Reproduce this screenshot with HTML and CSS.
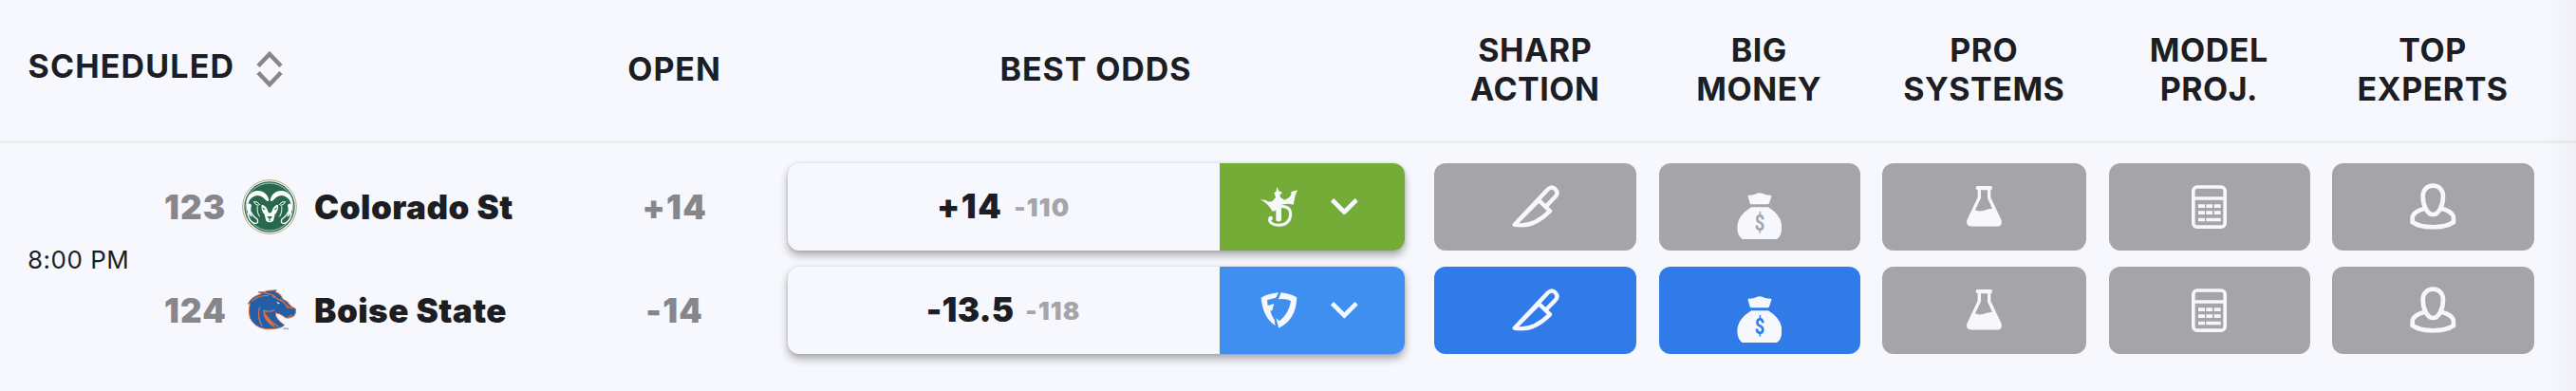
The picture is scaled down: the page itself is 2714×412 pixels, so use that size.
FILE: index.html
```html
<!DOCTYPE html>
<html lang="en">
<head>
    <meta charset="UTF-8">
    <meta name="viewport" content="width=device-width, initial-scale=1.0">
    <title>Best Odds</title>
    <link rel="stylesheet" href="styles.css">
</head>
<body>
    <svg class="sprite">
        <symbol id="knife" viewBox="98 77 150 134">
            <path d="M106 202L212 90Q224 79 235 90Q246 102 235 114L203 147M183 125L218 159Q172 204 128 204Q110 204 106 202Z" fill="none" stroke="currentColor" stroke-width="13" stroke-linejoin="round"/>
        </symbol>
        <symbol id="flask" viewBox="92 79 112 128">
            <path d="M126 79H168Q173 79 173 85Q173 91 168 92V115L202 187Q206 207 188 207H108Q89 207 93 187L127 115V92Q121 91 121 85Q121 79 126 79ZM137 92V117L119 155Q130 161 147 156Q158 151 173 150L158 117V92Z" fill="currentColor" fill-rule="evenodd"/>
        </symbol>
        <symbol id="calc" viewBox="117 72 111 138">
            <rect x="122.500" y="78" width="100" height="126.500" rx="12" fill="none" stroke="currentColor" stroke-width="11"/>
            <path d="M122 114H223" stroke="currentColor" stroke-width="11"/>
            <path d="M138 133h21v11h-21zM163 133h20v11h-20zM188 133h21v11h-21zM138 154h21v11h-21zM163 154h20v11h-20zM188 154h21v11h-21zM138 176h21v11h-21zM163 176h46v11h-46z" fill="currentColor"/>
        </symbol>
        <symbol id="person" viewBox="809 69 146 146">
            <path d="M882 77C900 77 914 90 914 110C914 140 900 168 882 168C864 168 850 140 850 110C850 90 864 77 882 77ZM856 149Q817 159 817 180V192Q840 208 882 208Q924 208 947 192V180Q947 159 908 149" fill="none" stroke="currentColor" stroke-width="14"/>
        </symbol>
        <symbol id="chevron" viewBox="306 87 86 53">
            <path d="M310.500 92L349 130.500L387.500 92" fill="none" stroke="currentColor" stroke-width="14"/>
        </symbol>
    </svg>

    <div class="odds-table">
        <div class="table-header">
            <div class="head-cell scheduled">
                <span>SCHEDULED</span>
                <svg class="sort-icon" viewBox="0 0 28 38"><path d="M2 15.500L14 3L26 15.500M2 22.500L14 35L26 22.500" fill="none" stroke="#86868b" stroke-width="4.500"/></svg>
            </div>
            <div class="head-cell wide">OPEN</div>
            <div class="head-cell wide">BEST ODDS</div>
            <div class="head-cell">SHARP<br>ACTION</div>
            <div class="head-cell">BIG<br>MONEY</div>
            <div class="head-cell">PRO<br>SYSTEMS</div>
            <div class="head-cell">MODEL<br>PROJ.</div>
            <div class="head-cell">TOP<br>EXPERTS</div>
            <div class="head-cell"></div>
        </div>

        <div class="game">
            <div class="game-info">
                <div class="time">8:00 PM</div>
                <div class="teams">
                    <div class="team">
                        <span class="rotation">123</span>
                        <svg class="logo" viewBox="45 56 174 174">
                            <circle cx="132" cy="143" r="85" fill="#f7f8fe" stroke="#b3a575" stroke-width="3"/>
                            <circle cx="132" cy="143" r="80" fill="#28694d"/>
                            <circle cx="132" cy="143" r="75" fill="none" stroke="#f7f8fe" stroke-width="2"/>
                            <path d="M130 122C126 101 108 89 88 93C64 98 57 125 59 144C61 160 68 170 77 176Q70 156 75 137Q68 130 64 134Q67 117 84 109Q103 103 117 119L126 126ZM134 122C138 101 156 89 176 93C200 98 207 125 205 144C203 160 196 170 187 176Q194 156 189 137Q196 130 200 134Q197 117 180 109Q161 103 147 119L138 126Z" fill="#fff"/>
                            <path d="M64 161Q65 187 84 195Q98 197 94 183Q77 170 73 159M200 161Q199 187 180 195Q166 197 170 183Q187 170 191 159" fill="none" stroke="#fff" stroke-width="4"/>
                            <path d="M102 137Q94 124 82 127Q88 139 98 138M162 137Q170 124 182 127Q176 139 166 138M94 141Q91 161 101 174M170 141Q173 161 163 174" fill="none" stroke="#fff" stroke-width="3"/>
                            <path d="M107 136Q120 138 125 152L129 162L137 162L141 152Q146 138 159 136Q162 152 149 167L144 187Q132 197 121 187L116 167Q103 152 107 136Z" fill="#fff"/>
                            <path d="M109 144L120 151L112 151ZM156 144L145 151L153 151ZM124 173H141L136 180H129ZM131 179h3v9h-3z" fill="#28694d"/>
                        </svg>
                        <span class="name">Colorado St</span>
                    </div>
                    <div class="team">
                        <span class="rotation">124</span>
                        <svg class="logo" viewBox="45 42 174 174">
                            <path d="M64 109Q72 89 97 80L108 76L96 71Q116 73 126 67L154 65L150 71Q166 73 174 94L187 101L201 117L214 124Q217 139 209 147L200 151Q185 157 176 148Q166 139 151 137Q149 154 179 176Q164 190 119 188Q83 182 70 153Q64 131 70 107Z" fill="#235fa9" stroke="#e2703d" stroke-width="3"/>
                            <path d="M75 101Q100 79 128 83M113 74Q140 77 151 87M141 84L158 93L174 102L193 119L205 123M164 94Q180 103 190 122M113 130Q132 136 149 128M204 143L190 149" fill="none" stroke="#e2703d" stroke-width="3.500"/>
                            <path d="M101 118Q93 150 109 180Q98 167 97 147Q96 130 101 118ZM113 130Q124 157 150 184Q136 178 123 162Q112 147 113 130ZM121 144Q139 168 162 181Q139 173 125 158Z" fill="#e2703d" stroke="#e2703d" stroke-width="2"/>
                            <path d="M154 102L165 106L159 109Z" fill="#fff"/>
                            <path d="M174 184h18v6h-18z" fill="#bcd5ee"/>
                            <path d="M176 186h7M185 189v-3l3 2l3-2v3" stroke="#4b83bd" stroke-width="1.500" fill="none"/>
                        </svg>
                        <span class="name">Boise State</span>
                    </div>
                </div>
            </div>

            <div class="cell">
                <div class="line">+14</div>
                <div class="line">-14</div>
            </div>

            <div class="cell">
                <div class="best-odds">
                    <div class="price"><span class="spread">+14</span><span class="juice">-110</span></div>
                    <div class="book draftkings">
                        <svg class="book-logo" viewBox="84 50 117 126">
                            <path d="M84 90L101 92Q111 100 122 94L132 83L129 73L126 68L133 66L136 50L142 63L150 66L152 71L145 74L147 83L160 91Q177 86 182 71L180 66L201 60L194 76L188 106Q149 96 122 128Q110 104 84 90Z" fill="currentColor"/>
                            <path d="M124 124Q143 107 163 113Q180 118 179 138Q176 170 141 171Q112 169 112 151" fill="none" stroke="currentColor" stroke-width="9"/>
                            <circle cx="116" cy="149" r="7" fill="currentColor"/>
                            <path d="M133 118L150 111V156Q141 163 133 156Z" fill="currentColor"/>
                        </svg>
                        <svg class="chevron"><use href="#chevron"/></svg>
                    </div>
                </div>
                <div class="best-odds">
                    <div class="price"><span class="spread half">-13.5</span><span class="juice">-118</span></div>
                    <div class="book fanduel">
                        <svg class="book-logo" viewBox="84 377 117 126">
                            <path d="M86 400Q110 387 141 384L133 400Q116 403 105 408L107 425L127 419L121 440L115 442Q120 459 128 470L131 488Q91 462 86 400ZM149 384Q178 387 199 399Q197 470 142 496L133 465L144 474Q175 448 180 410Q164 402 141 405Z" fill="currentColor"/>
                        </svg>
                        <svg class="chevron"><use href="#chevron"/></svg>
                    </div>
                </div>
            </div>

            <div class="cell">
                <div class="signal"><svg class="knife"><use href="#knife"/></svg></div>
                <div class="signal active"><svg class="knife"><use href="#knife"/></svg></div>
            </div>
            <div class="cell">
                <div class="signal">
                    <svg class="bag" viewBox="809 98 142 147">
                        <path d="M846 106Q858 106 864 104Q881 93 898 104Q904 106 916 106Q919 107 918 110L911 132Q910 135 907 135H855Q851 135 850 132L844 110Q843 107 846 106ZM855 144H908Q951 170 951 207Q951 235 935 245H826Q810 235 810 207Q811 170 855 144Z" fill="currentColor"/>
                        <text class="dollar" transform="translate(881 219) scale(.76 1)" text-anchor="middle">$</text>
                    </svg>
                </div>
                <div class="signal active">
                    <svg class="bag" viewBox="809 98 142 147">
                        <path d="M846 106Q858 106 864 104Q881 93 898 104Q904 106 916 106Q919 107 918 110L911 132Q910 135 907 135H855Q851 135 850 132L844 110Q843 107 846 106ZM855 144H908Q951 170 951 207Q951 235 935 245H826Q810 235 810 207Q811 170 855 144Z" fill="currentColor"/>
                        <text class="dollar" transform="translate(881 219) scale(.76 1)" text-anchor="middle">$</text>
                    </svg>
                </div>
            </div>
            <div class="cell">
                <div class="signal"><svg class="flask"><use href="#flask"/></svg></div>
                <div class="signal"><svg class="flask"><use href="#flask"/></svg></div>
            </div>
            <div class="cell">
                <div class="signal"><svg class="calc"><use href="#calc"/></svg></div>
                <div class="signal"><svg class="calc"><use href="#calc"/></svg></div>
            </div>
            <div class="cell">
                <div class="signal"><svg class="person"><use href="#person"/></svg></div>
                <div class="signal"><svg class="person"><use href="#person"/></svg></div>
            </div>
        </div>
        <div class="edge-shadow"></div>
    </div>
</body>
</html>
```
FILE: styles.css
```css
:root {
    --bg: #f7f8fe;
    --text: #1c1e24;
    --gray: #86868b;
    --gray-light: #a5a4a9;
    --blue: #307be8;
    --columns: 611px 199px 689px 236.5px 235.5px 238.5px 235.5px 236px 1fr;
}

* {
    box-sizing: border-box;
}

body {
    margin: 0;
    background: var(--bg);
    color: var(--text);
    font-family: Inter, "Liberation Sans", sans-serif;
    font-size: 34px;
}

svg {
    display: block;
    flex-shrink: 0;
}

.sprite {
    width: 0;
    height: 0;
    position: absolute;
}

.odds-table {
    position: relative;
    height: 412px;
    overflow: hidden;
}

.table-header,
.game {
    display: grid;
    grid-template-columns: var(--columns);
}

.table-header {
    height: 151px;
}

.head-cell {
    display: flex;
    align-items: center;
    justify-content: center;
    border-bottom: 3px solid #ecedf1;
    padding-bottom: 3px;
    font-weight: 700;
    line-height: 41px;
    letter-spacing: 0.5px;
    text-align: center;
}

.head-cell.wide {
    letter-spacing: 0.9px;
    padding-bottom: 4px;
}

.head-cell.scheduled {
    justify-content: flex-start;
    gap: 23px;
    padding: 0 0 9px 29.5px;
    letter-spacing: 1.15px;
}

.sort-icon {
    width: 28px;
    height: 38px;
    margin-top: 7px;
}

.game-info {
    display: flex;
    align-items: center;
    padding: 20.5px 0 0 29px;
}

.time {
    width: 144px;
    font-size: 26px;
    letter-spacing: 0.5px;
    padding-top: 3px;
}

.teams,
.cell {
    display: flex;
    flex-direction: column;
    gap: 17.3px;
}

.cell {
    padding: 20.5px 11.5px 0 12px;
}

.team,
.line {
    height: 92px;
    display: flex;
    align-items: center;
    font-size: 35px;
    font-weight: 900;
}

.rotation {
    width: 82px;
    color: var(--gray);
    letter-spacing: 1.2px;
}

.logo {
    width: 58px;
    height: 58px;
}

.name {
    margin-left: 18px;
    letter-spacing: 0.5px;
}

.line {
    justify-content: center;
    color: var(--gray);
    letter-spacing: 1.3px;
}

.best-odds {
    display: flex;
    width: 650px;
    height: 92px;
    margin-left: 8px;
    border-radius: 12px;
    background: var(--bg);
    box-shadow: 0 5px 9px rgba(0, 0, 0, 0.32), 0 0 3px rgba(0, 0, 0, 0.12);
}

.price {
    width: 454.5px;
    display: flex;
    align-items: center;
    justify-content: center;
    gap: 12px;
    padding-bottom: 1px;
    font-weight: 900;
}

.spread {
    font-size: 35px;
    letter-spacing: 1.5px;
}

.spread.half {
    letter-spacing: 0.2px;
}

.juice {
    color: var(--gray-light);
    font-size: 26px;
    letter-spacing: 1.2px;
    padding-top: 3px;
}

.book {
    flex: 1;
    display: flex;
    align-items: center;
    gap: 35px;
    padding-left: 43.5px;
    border-radius: 0 12px 12px 0;
    color: var(--bg);
}

.draftkings {
    background: #74ac37;
}

.fanduel {
    background: #3f8ff0;
}

.book-logo {
    width: 39px;
    height: 42px;
}

.chevron {
    width: 28.7px;
    height: 17.7px;
}

.signal {
    height: 92px;
    display: flex;
    align-items: center;
    justify-content: center;
    border-radius: 12px;
    background: var(--gray-light);
    color: var(--bg);
}

.signal.active {
    background: var(--blue);
}

.dollar {
    fill: var(--gray-light);
    font-family: Roboto, sans-serif;
    font-size: 72px;
    font-weight: 700;
}

.active .dollar {
    fill: var(--blue);
}

.knife {
    width: 50px;
    height: 44.7px;
}

.bag {
    width: 47.3px;
    height: 49px;
    margin-top: 19px;
}

.flask {
    width: 37.3px;
    height: 42.7px;
}

.calc {
    width: 37px;
    height: 46px;
}

.person {
    width: 48.7px;
    height: 48.7px;
}

.edge-shadow {
    position: absolute;
    top: 0;
    right: 0;
    width: 34px;
    height: 100%;
    background: linear-gradient(to right, rgba(0, 0, 0, 0), rgba(0, 0, 0, 0.03));
}
```
